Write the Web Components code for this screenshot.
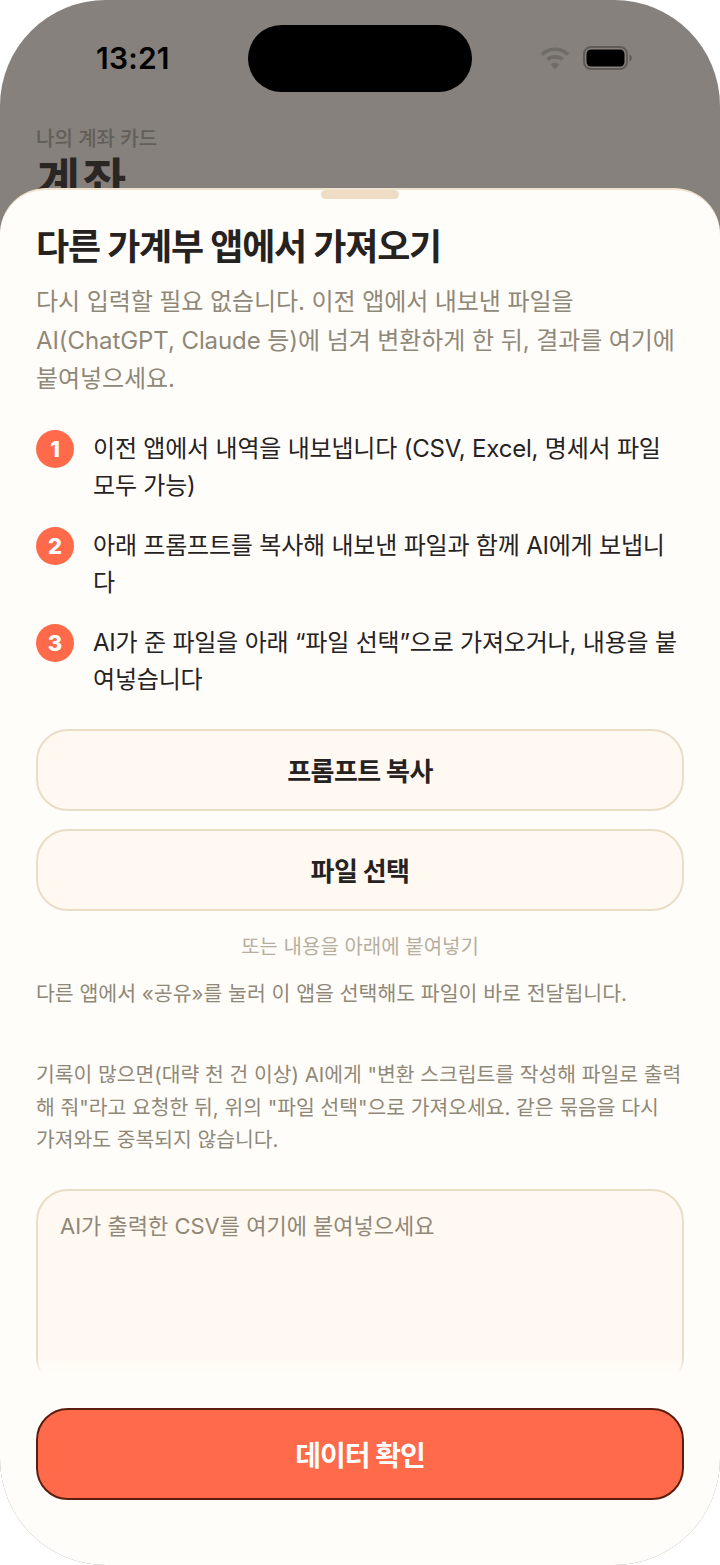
<!DOCTYPE html>
<html lang="ko">
<head>
<meta charset="utf-8">
<title>가져오기</title>
<style>
  html, body { margin: 0; background: #fff; }
  body { font-family: Inter, "Noto Sans CJK KR", sans-serif; }
</style>
</head>
<body>
<phone-screen>
  <status-bar slot="status"></status-bar>
  <account-header slot="behind"></account-header>
  <import-sheet slot="sheet" heading="다른 가계부 앱에서 가져오기">
    <p class="lead" slot="lead">다시 입력할 필요 없습니다. 이전 앱에서 내보낸 파일을 AI(ChatGPT, Claude 등)에 넘겨 변환하게 한 뒤, 결과를 여기에 붙여넣으세요.</p>
    <step-item slot="steps" num="1">이전 앱에서 내역을 내보냅니다 (CSV, Excel, 명세서 파일 모두 가능)</step-item>
    <step-item slot="steps" num="2">아래 프롬프트를 복사해 내보낸 파일과 함께 AI에게 보냅니다</step-item>
    <step-item slot="steps" num="3">AI가 준 파일을 아래 “파일 선택”으로 가져오거나, 내용을 붙여넣습니다</step-item>
    <ghost-button slot="actions">프롬프트 복사</ghost-button>
    <ghost-button slot="actions">파일 선택</ghost-button>
    <paste-box slot="paste" placeholder="AI가 출력한 CSV를 여기에 붙여넣으세요"></paste-box>
    <primary-button slot="footer">데이터 확인</primary-button>
  </import-sheet>
</phone-screen>

<script>
  customElements.define('phone-screen', class extends HTMLElement {
    constructor() {
      super();
      this.attachShadow({ mode: 'open' }).innerHTML = `
        <style>
          :host {
            display: block;
            position: relative;
            width: 720px;
            height: 1565px;
            overflow: hidden;
            border-radius: 106px;
            background: #86817c;
          }
          .sheet { position: absolute; left: 0; right: 0; top: 188px; bottom: 0; display: flex; }
        </style>
        <slot name="status"></slot>
        <slot name="behind"></slot>
        <div class="sheet"><slot name="sheet"></slot></div>
      `;
    }
  });

  customElements.define('status-bar', class extends HTMLElement {
    constructor() {
      super();
      this.attachShadow({ mode: 'open' }).innerHTML = `
        <style>
          :host {
            display: grid;
            grid-template-columns: 1fr 224px 1fr;
            align-items: center;
            height: 67px;
            padding-top: 25px;
          }
          .time {
            padding-left: 96px;
            margin-bottom: 2px;
            font: 600 30px/1 Inter, sans-serif;
            letter-spacing: 0.2px;
            color: #000;
          }
          .island { height: 67px; border-radius: 34px; background: #000; }
          .icons { display: flex; align-items: center; gap: 13px; padding-left: 68px; margin-bottom: 2px; }
          svg { display: block; }
        </style>
        <div class="time">13:21</div>
        <div class="island"></div>
        <div class="icons">
          <svg width="30" height="24" viewBox="0 0 30 24" fill="none" stroke="#6f6b67" stroke-width="3.6" stroke-linecap="butt">
            <path d="M2 8.5C9.5 1.5 20.5 1.500 28 8.5"/>
            <path d="M7.500 13.500C11.500 10 18.500 10 22.500 13.500"/>
            <path d="M15 23.500 10.800 18.300C13 16.300 17 16.300 19.200 18.300Z" fill="#6f6b67" stroke="none"/>
          </svg>
          <svg width="49" height="24" viewBox="0 0 49 24">
            <rect x="1" y="1" width="43" height="22" rx="7" fill="none" stroke="#5f5b58" stroke-width="2"/>
            <rect x="3.500" y="3.500" width="38" height="17" rx="4.500" fill="#000"/>
            <path d="M46.500 8.500c1.500.6 2.300 2 2.300 3.500s-.8 2.900-2.300 3.500z" fill="#5f5b58"/>
          </svg>
        </div>
      `;
    }
  });

  customElements.define('account-header', class extends HTMLElement {
    constructor() {
      super();
      this.attachShadow({ mode: 'open' }).innerHTML = `
        <style>
          :host { display: block; padding: 35px 36px 0; font-family: Inter, "Noto Sans CJK KR", sans-serif; }
          .sub { font-size: 20px; line-height: 24px; font-weight: 500; color: #625e59; }
          .title { font-size: 48px; line-height: 54px; margin-top: 3px; font-weight: 700; color: #2a2623; letter-spacing: 2px; }
        </style>
        <div class="sub">나의 계좌 카드</div>
        <div class="title">계좌</div>
      `;
    }
  });

  customElements.define('import-sheet', class extends HTMLElement {
    constructor() {
      super();
      const root = this.attachShadow({ mode: 'open' });
      root.innerHTML = `
        <style>
          :host {
            display: flex;
            flex-direction: column;
            flex: 1;
            min-width: 0;
            position: relative;
            background: #fffdf9;
            border-top: 2px solid #efe3cf;
            border-radius: 46px 46px 0 0;
            font-family: Inter, "Noto Sans CJK KR", sans-serif;
          }
          .grabber {
            position: absolute;
            top: 0;
            left: 321px;
            width: 78px;
            height: 9px;
            border-radius: 5px;
            background: #eedcc4;
          }
          .body { flex: 1; min-height: 0; overflow: hidden; padding: 33px 36px 0; }
          h2 {
            margin: 0;
            font-size: 36px;
            line-height: 48px;
            font-weight: 700;
            letter-spacing: -1.2px;
            color: #26221f;
          }
          ::slotted(.lead) {
            margin: 12px 0 0;
            font-size: 24px;
            line-height: 38.500px;
            letter-spacing: -0.08px;
            color: #8f8878;
          }
          .steps { display: flex; flex-direction: column; gap: 23px; margin-top: 31px; }
          .actions { display: flex; flex-direction: column; gap: 18px; margin-top: 31px; }
          .hint { margin-top: 24px; text-align: center; font-size: 20px; line-height: 24px; color: #b6ae9e; }
          .note { margin: 0; font-size: 20.400px; line-height: 32.500px; color: #8f8878; }
          .note.share { margin-top: 19px; font-size: 20.500px; }
          .note.long { margin-top: 49px; }
          .paste { margin-top: 32px; }
          .footer { position: relative; padding: 34px 36px 65px; }
          .footer::before {
            content: "";
            position: absolute;
            left: 0;
            right: 0;
            top: -16px;
            height: 16px;
            background: linear-gradient(rgba(255, 253, 249, 0), #fffdf9);
          }
        </style>
        <div class="grabber"></div>
        <div class="body">
          <h2></h2>
          <slot name="lead"></slot>
          <div class="steps"><slot name="steps"></slot></div>
          <div class="actions"><slot name="actions"></slot></div>
          <div class="hint">또는 내용을 아래에 붙여넣기</div>
          <p class="note share">다른 앱에서 «공유»를 눌러 이 앱을 선택해도 파일이 바로 전달됩니다.</p>
          <p class="note long">기록이 많으면(대략 천 건 이상) AI에게 "변환 스크립트를 작성해 파일로 출력해 줘"라고 요청한 뒤, 위의 "파일 선택"으로 가져오세요. 같은 묶음을 다시<br>가져와도 중복되지 않습니다.</p>
          <div class="paste"><slot name="paste"></slot></div>
        </div>
        <div class="footer"><slot name="footer"></slot></div>
      `;
      root.querySelector('h2').textContent = this.getAttribute('heading');
    }
  });

  customElements.define('step-item', class extends HTMLElement {
    constructor() {
      super();
      const root = this.attachShadow({ mode: 'open' });
      root.innerHTML = `
        <style>
          :host {
            display: grid;
            grid-template-columns: 38px 1fr;
            column-gap: 19px;
            font-size: 24px;
            line-height: 37px;
            letter-spacing: -0.2px;
            color: #26221f;
          }
          .num {
            width: 38px;
            height: 38px;
            border-radius: 50%;
            background: #ff6b4a;
            color: #fff;
            font-size: 22px;
            font-weight: 800;
            line-height: 38px;
            text-align: center;
            letter-spacing: 0;
          }
        </style>
        <div class="num"></div>
        <div><slot></slot></div>
      `;
      root.querySelector('.num').textContent = this.getAttribute('num');
    }
  });

  customElements.define('ghost-button', class extends HTMLElement {
    constructor() {
      super();
      this.attachShadow({ mode: 'open' }).innerHTML = `
        <style>
          :host {
            display: flex;
            align-items: center;
            justify-content: center;
            box-sizing: border-box;
            height: 82px;
            border: 2px solid #e9ddc7;
            border-radius: 32px;
            background: #fff9f2;
            color: #26221f;
            font-size: 26px;
            font-weight: 700;
            letter-spacing: -0.6px;
          }
        </style>
        <slot></slot>
      `;
    }
  });

  customElements.define('paste-box', class extends HTMLElement {
    constructor() {
      super();
      const root = this.attachShadow({ mode: 'open' });
      root.innerHTML = `
        <style>
          :host {
            display: block;
            box-sizing: border-box;
            height: 200px;
            padding: 18px 22px;
            border: 2px solid #e9ddc7;
            border-radius: 32px;
            background: #fff9f2;
            color: #8f8878;
            font-size: 22px;
            line-height: 34px;
          }
        </style>
        <div class="ph"></div>
      `;
      root.querySelector('.ph').textContent = this.getAttribute('placeholder');
    }
  });

  customElements.define('primary-button', class extends HTMLElement {
    constructor() {
      super();
      this.attachShadow({ mode: 'open' }).innerHTML = `
        <style>
          :host {
            display: flex;
            align-items: center;
            justify-content: center;
            box-sizing: border-box;
            height: 92px;
            border: 2px solid #5c1d0e;
            border-radius: 32px;
            background: #ff6b4a;
            color: #fff;
            font-size: 28px;
            font-weight: 700;
            letter-spacing: -1px;
          }
        </style>
        <slot></slot>
      `;
    }
  });
</script>
</body>
</html>
